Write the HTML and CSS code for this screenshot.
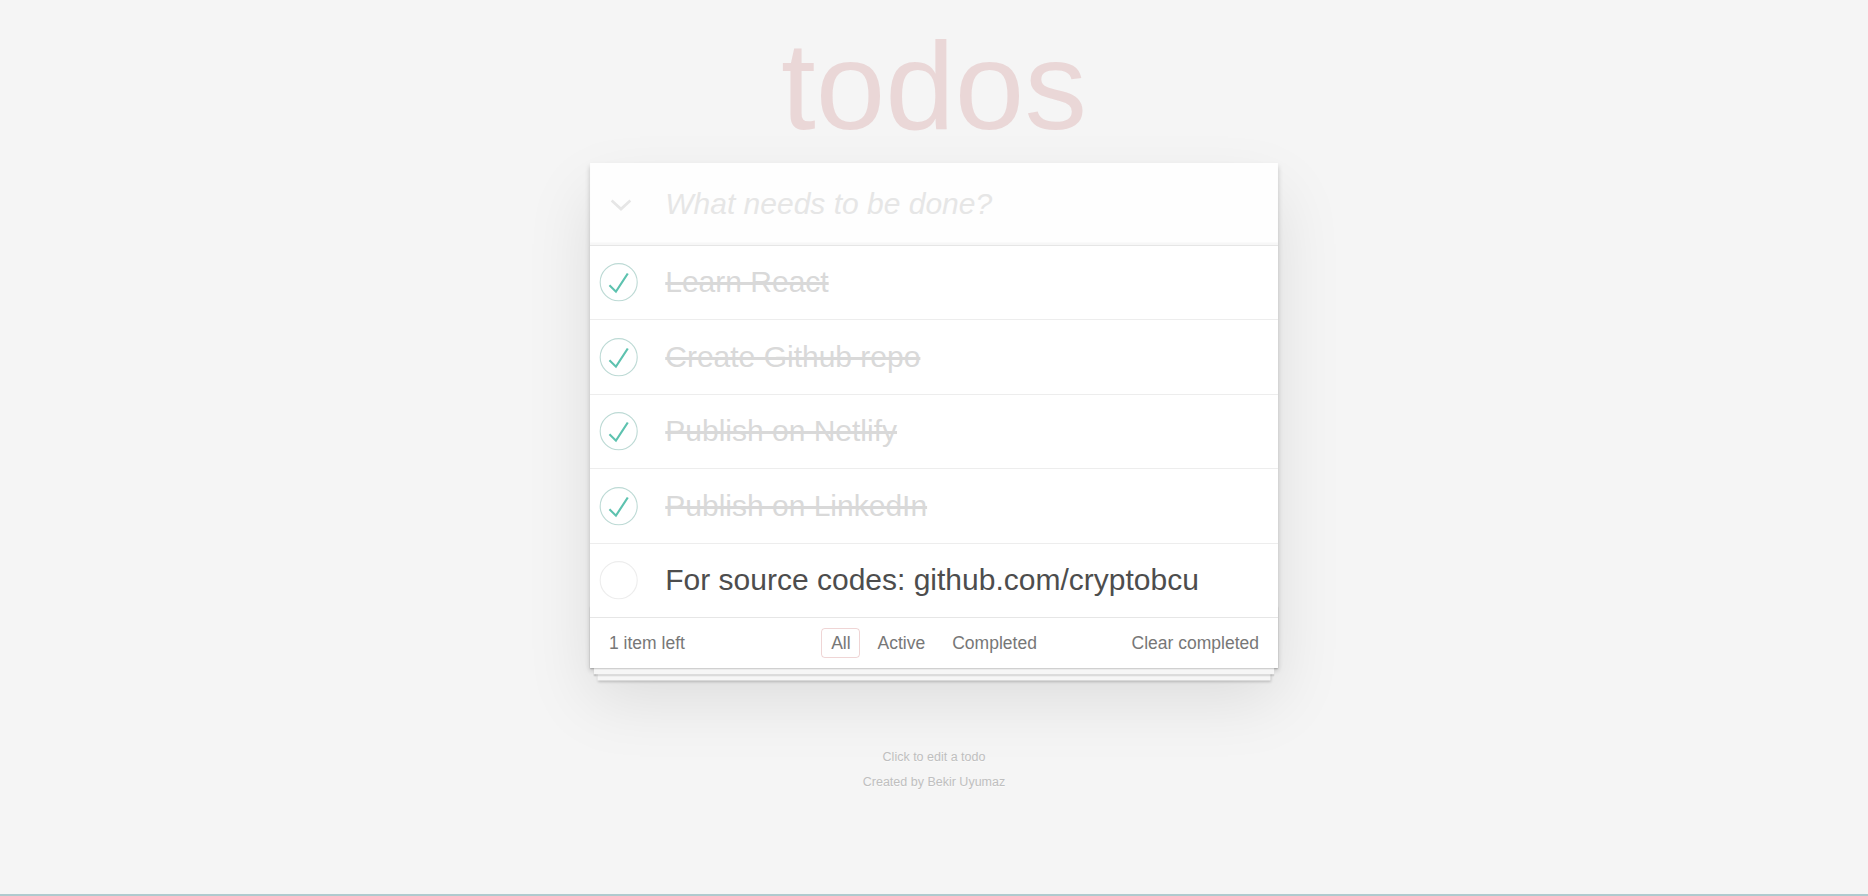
FILE: index.html
```html
<!DOCTYPE html>
<html lang="en">
<head>
<meta charset="utf-8">
<title>React • TodoMVC</title>
<link rel="stylesheet" href="styles.css">
</head>
<body>
<div class="page">
  <h1 class="title">todos</h1>
  <section class="todoapp">
    <header class="header">
      <span class="toggle-all" aria-label="Mark all as complete">
        <svg class="chevron" viewBox="0 0 18 10" width="17.6" height="9.6"><path d="M1.2 1.2 L9 8.4 L16.8 1.2" fill="none" stroke="#e6e6e6" stroke-width="2.2"/></svg>
      </span>
      <input class="new-todo" type="text" placeholder="What needs to be done?">
    </header>
    <section class="main">
      <ul class="todo-list">
        <li class="todo completed">
          <svg class="toggle" width="40" height="40" viewBox="-10 -18 100 135"><circle cx="50" cy="50" r="50" fill="none" stroke="#bddad5" stroke-width="3"/><path fill="#5dc2af" d="M72 25L42 71 27 56l-4 4 20 20 34-52z"/></svg>
          <label class="todo-label">Learn React</label>
        </li>
        <li class="todo completed">
          <svg class="toggle" width="40" height="40" viewBox="-10 -18 100 135"><circle cx="50" cy="50" r="50" fill="none" stroke="#bddad5" stroke-width="3"/><path fill="#5dc2af" d="M72 25L42 71 27 56l-4 4 20 20 34-52z"/></svg>
          <label class="todo-label">Create Github repo</label>
        </li>
        <li class="todo completed">
          <svg class="toggle" width="40" height="40" viewBox="-10 -18 100 135"><circle cx="50" cy="50" r="50" fill="none" stroke="#bddad5" stroke-width="3"/><path fill="#5dc2af" d="M72 25L42 71 27 56l-4 4 20 20 34-52z"/></svg>
          <label class="todo-label">Publish on Netlify</label>
        </li>
        <li class="todo completed">
          <svg class="toggle" width="40" height="40" viewBox="-10 -18 100 135"><circle cx="50" cy="50" r="50" fill="none" stroke="#bddad5" stroke-width="3"/><path fill="#5dc2af" d="M72 25L42 71 27 56l-4 4 20 20 34-52z"/></svg>
          <label class="todo-label">Publish on LinkedIn</label>
        </li>
        <li class="todo">
          <svg class="toggle" width="40" height="40" viewBox="-10 -18 100 135"><circle cx="50" cy="50" r="50" fill="none" stroke="#ededed" stroke-width="3"/></svg>
          <label class="todo-label">For source codes: github.com/cryptobcu</label>
        </li>
      </ul>
    </section>
    <footer class="footer">
      <span class="todo-count"><strong>1</strong> item left</span>
      <ul class="filters"><li><a class="filter selected" href="#/">All</a></li><li><a class="filter" href="#/active">Active</a></li><li><a class="filter" href="#/completed">Completed</a></li></ul>
      <span class="clear-completed">Clear completed</span>
    </footer>
  </section>
  <footer class="info">
    <p class="info-line">Click to edit a todo</p>
    <p class="info-line">Created by Bekir Uyumaz</p>
  </footer>
</div>
<div class="bottom-line"></div>
</body>
</html>
```

FILE: styles.css
```css
html {
  margin: 0;
  padding: 0;
  zoom: 1.25;
  background: #f5f5f5;
}

body {
  margin: 0;
  padding: 0;
  font: 14px "Liberation Sans", Arial, Helvetica, sans-serif;
  line-height: 1.4em;
  color: #4d4d4d;
  font-weight: 300;
}

.page {
  min-width: 230px;
  max-width: 550px;
  margin: 0 auto;
  padding-top: 18px;
}

.title {
  margin: 0 0 12px 0;
  height: 100px;
  font-size: 100px;
  line-height: 100px;
  font-weight: 100;
  text-align: center;
  color: rgba(175, 47, 47, 0.15);
}

.todoapp {
  background: #fff;
  margin: 0 0 40px 0;
  position: relative;
  box-shadow: 0 2px 4px 0 rgba(0, 0, 0, 0.2), 0 25px 50px 0 rgba(0, 0, 0, 0.1);
}

.header {
  display: flex;
  align-items: center;
  height: 65.6px;
  background: rgba(0, 0, 0, 0.003);
  box-shadow: inset 0 -2px 1px rgba(0, 0, 0, 0.03);
}

.toggle-all {
  flex: 0 0 60px;
  display: flex;
  align-items: center;
  padding-left: 16px;
  padding-top: 3px;
  box-sizing: border-box;
}

.chevron {
  display: block;
}

.new-todo {
  flex: 1;
  min-width: 0;
  height: 65.6px;
  box-sizing: border-box;
  margin: 0;
  padding: 16px 16px 16px 0;
  border: none;
  outline: none;
  background: transparent;
  font-family: inherit;
  font-size: 24px;
  font-weight: inherit;
  line-height: 1.4em;
  color: inherit;
}

.new-todo::placeholder {
  font-style: italic;
  font-weight: 300;
  color: #e6e6e6;
}

.main {
  position: relative;
  z-index: 2;
  border-top: 1px solid #e6e6e6;
}

.todo-list {
  margin: 0;
  padding: 0;
  list-style: none;
}

.todo {
  display: flex;
  align-items: center;
  font-size: 24px;
  border-bottom: 1px solid #ededed;
}

.todo:last-child {
  border-bottom: none;
}

.toggle {
  flex: 0 0 40px;
  display: block;
}

.todo-label {
  display: block;
  flex: 1;
  padding: 15px 15px 15px 20px;
  line-height: 1.2;
  word-break: break-all;
  color: #4d4d4d;
}

.todo.completed .todo-label {
  color: #d9d9d9;
  text-decoration: line-through;
}

.footer {
  position: relative;
  display: grid;
  grid-template-columns: 1fr auto 1fr;
  align-items: center;
  color: #777;
  padding: 10px 15px;
  height: 20px;
  border-top: 1px solid #e6e6e6;
}

.footer::before {
  content: '';
  position: absolute;
  right: 0;
  bottom: 0;
  left: 0;
  height: 50px;
  overflow: hidden;
  pointer-events: none;
  box-shadow: 0 1px 1px rgba(0, 0, 0, 0.2),
              0 8px 0 -3px #f6f6f6,
              0 9px 1px -3px rgba(0, 0, 0, 0.2),
              0 16px 0 -6px #f6f6f6,
              0 17px 2px -6px rgba(0, 0, 0, 0.2);
}

.todo-count {
  justify-self: start;
  text-align: left;
}

.todo-count strong {
  font-weight: 300;
}

.filters {
  margin: 0;
  padding: 0;
  list-style: none;
  text-align: center;
}

.filters li {
  display: inline;
}

.filter {
  color: inherit;
  margin: 3px;
  padding: 3px 7px;
  text-decoration: none;
  border: 1px solid transparent;
  border-radius: 3px;
}

.filter.selected {
  border-color: rgba(175, 47, 47, 0.2);
}

.clear-completed {
  justify-self: end;
  line-height: 20px;
  cursor: pointer;
}

.info {
  margin: 66px auto 0;
  color: #bfbfbf;
  font-size: 10px;
  text-shadow: 0 1px 0 rgba(255, 255, 255, 0.5);
  text-align: center;
}

.info-line {
  line-height: 1;
  margin: 10px 0;
}

.bottom-line {
  position: fixed;
  left: 0;
  right: 0;
  bottom: 0;
  height: 1.6px;
  background: #afcace;
}
```
